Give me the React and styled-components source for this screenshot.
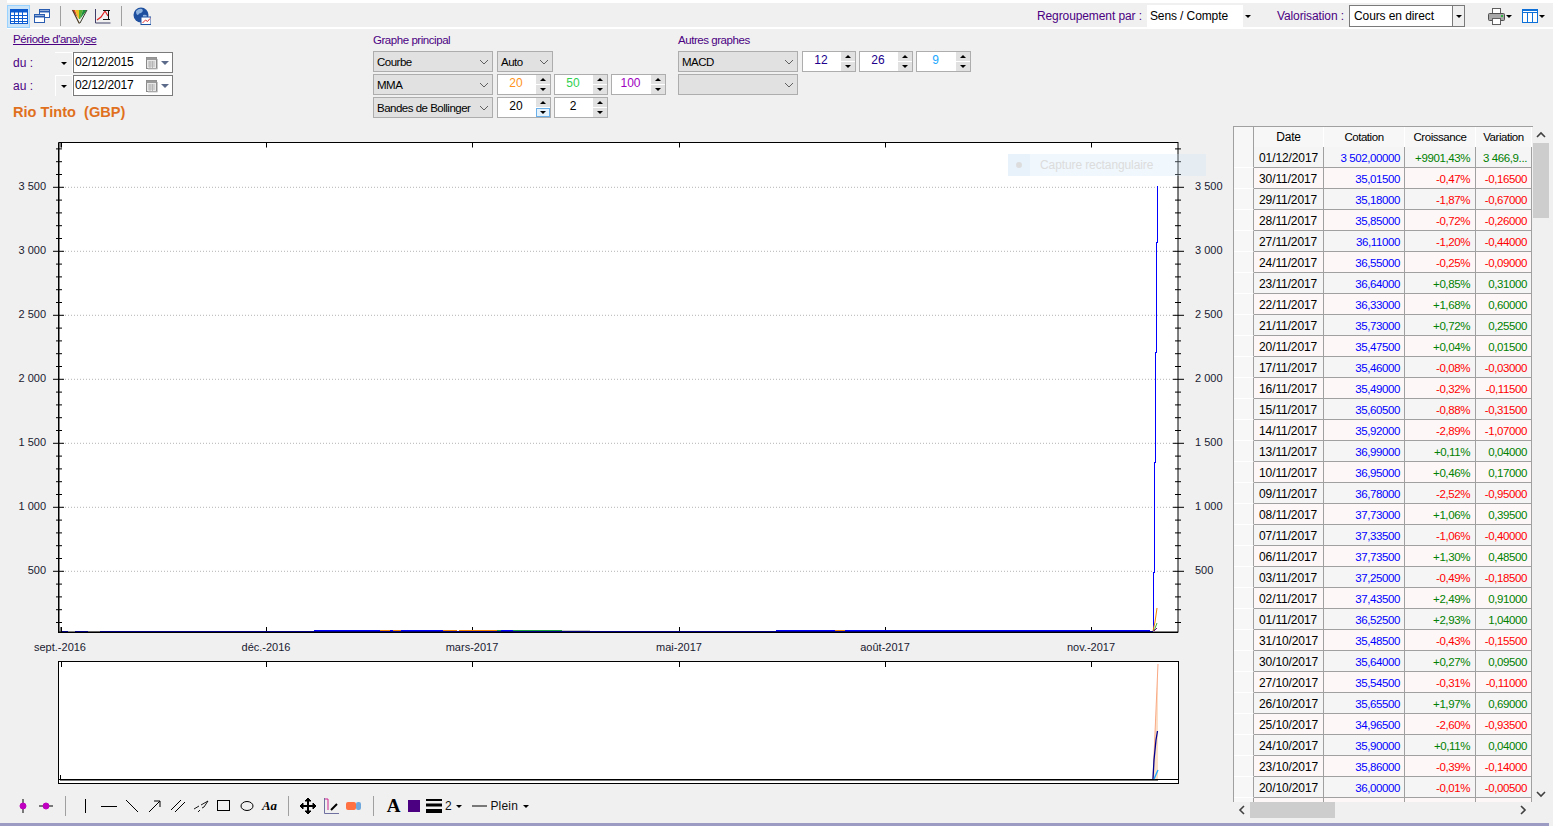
import React from 'react'
import styled, { createGlobalStyle } from 'styled-components'

const GlobalStyle = createGlobalStyle`
  html, body { margin: 0; padding: 0; background: #f0f0f0; }
  body { font-family: "Liberation Sans", Arial, sans-serif; font-size: 12px; color: #000; overflow: hidden; }
`

const INDIGO = '#4b0082'

const Page = styled.div`
  width: 1553px;
  height: 826px;
  display: flex;
  flex-direction: column;
  overflow: hidden;
`

const TopBar = styled.div`
  height: 22px;
  padding-top: 2px;
  margin-left: 7px;
  border-top: 3px solid #fff;
  border-bottom: 2px solid #fff;
  display: flex;
  align-items: center;
`

const IconButton = styled.div`
  width: ${p => p.$w || 23}px;
  height: 23px;
  flex: none;
  display: flex;
  align-items: center;
  justify-content: center;
  box-sizing: border-box;
  margin-left: ${p => p.$ml || 0}px;
  background: ${p => (p.$active ? '#cce4f7' : 'transparent')};
  border: ${p => (p.$active ? '1px solid #99d1ff' : '0')};
`

const Sep = styled.div`
  width: 1px;
  height: 20px;
  flex: none;
  background: #a0a0a0;
  margin-left: ${p => p.$ml || p.$m || 9}px;
  margin-right: ${p => p.$mr || p.$m || 9}px;
`

const Spacer = styled.div`
  flex: 1;
`

const BarLabel = styled.span`
  color: ${INDIGO};
  letter-spacing: -0.1px;
  margin-left: ${p => p.$ml || 0}px;
  white-space: nowrap;
`

const PlainPick = styled.div`
  width: 107px;
  height: 22px;
  margin-left: 5px;
  background: #fff;
  display: flex;
  align-items: center;
  justify-content: space-between;
  padding-left: 3px;
  box-sizing: border-box;
  letter-spacing: -0.1px;
`

const PickArrow = styled.div`
  width: 11px;
  height: 22px;
  background: #f0f0f0;
  display: flex;
  align-items: center;
  justify-content: center;
`

const BoxPick = styled.div`
  width: 116px;
  height: 22px;
  margin-left: 5px;
  background: #fff;
  border: 1px solid #7a7a7a;
  box-sizing: border-box;
  display: flex;
  align-items: center;
  justify-content: space-between;
  padding-left: 4px;
  letter-spacing: -0.1px;
`

const BoxArrow = styled.div`
  width: 11px;
  height: 20px;
  background: #f0f0f0;
  border-left: 1px solid #7a7a7a;
  display: flex;
  align-items: center;
  justify-content: center;
`

const Caret = styled.span`
  width: 0;
  height: 0;
  flex: none;
  border-left: 3px solid transparent;
  border-right: 3px solid transparent;
  ${p => (p.$up ? 'border-bottom' : 'border-top')}: 3px solid ${p => p.$color || '#000'};
  margin-left: ${p => p.$ml || 0}px;
  margin-right: ${p => p.$mr || 0}px;
  display: inline-block;
`

const Filters = styled.div`
  height: 97px;
  display: flex;
  flex: none;
  padding-left: 13px;
`

const Group = styled.div`
  width: ${p => p.$w}px;
  flex: none;
  display: flex;
  flex-direction: column;
`

const GroupTitle = styled.div`
  height: 22px;
  padding-top: ${p => (p.$link ? 3 : 4)}px;
  line-height: 15px;
  box-sizing: border-box;
  color: ${INDIGO};
  font-size: 11.5px;
  letter-spacing: -0.45px;
  text-decoration: ${p => (p.$link ? 'underline' : 'none')};
`

const Rows = styled.div`
  display: flex;
  flex-direction: column;
  gap: 2px;
`

const Row = styled.div`
  display: flex;
  height: 21px;
  gap: ${p => p.$gap ?? 3}px;
`

const Combo = styled.div`
  width: ${p => p.$w || 120}px;
  height: 21px;
  margin-right: ${p => p.$mr || 1}px;
  box-sizing: border-box;
  background: #e1e1e1;
  border: 1px solid #adadad;
  display: flex;
  align-items: center;
  justify-content: space-between;
  padding: 0 3px 0 3px;
  font-size: 11.5px;
  letter-spacing: -0.5px;
  white-space: nowrap;
`

const Spin = styled.div`
  width: ${p => p.$w || 54}px;
  height: 21px;
  box-sizing: border-box;
  background: #fff;
  border: 1px solid #adadad;
  display: flex;
`

const SpinValue = styled.div`
  flex: 1;
  text-align: center;
  line-height: 17px;
  color: ${p => p.$color || '#000'};
  padding-right: 2px;
`

const SpinButtons = styled.div`
  width: 14px;
  flex: none;
  display: flex;
  flex-direction: column;
  gap: 1px;
`

const SpinButton = styled.div`
  flex: 1;
  box-sizing: border-box;
  background: ${p => (p.$hot ? '#e5f1fb' : '#e1e1e1')};
  border: 1px solid ${p => (p.$hot ? '#69b0ea' : '#e1e1e1')};
  display: flex;
  align-items: center;
  justify-content: center;
`

const DateRow = styled.div`
  display: flex;
  align-items: center;
  height: 21px;
  margin-top: ${p => p.$mt || 0}px;
`

const DateLabel = styled.div`
  width: 42px;
  color: ${INDIGO};
`

const DateArrow = styled.div`
  width: 18px;
  height: 21px;
  background: #f0f0f0;
  border-top: 1px solid #fff;
  border-right: 1px solid #fff;
  border-left: ${p => (p.$edge ? '1px solid #fff' : '0')};
  box-sizing: border-box;
  display: flex;
  align-items: center;
  justify-content: center;
`

const DateBox = styled.div`
  width: 100px;
  height: 21px;
  box-sizing: border-box;
  background: #fff;
  border: 1px solid #7a7a7a;
  display: flex;
  align-items: center;
  padding-left: 1px;
  letter-spacing: -0.15px;
`

const DateText = styled.span`
  width: 70px;
  line-height: 17px;
  margin-bottom: 1px;
`

const Title = styled.div`
  margin-top: 7px;
  font-weight: bold;
  font-size: 14.6px;
  line-height: 18px;
  color: #e0701e;
`

const Main = styled.div`
  flex: 1;
  display: flex;
  min-height: 0;
`

const ChartColumn = styled.div`
  width: 1233px;
  flex: none;
  position: relative;
  display: flex;
  flex-direction: column;
`

const ChartSvg = styled.svg`
  display: block;
  flex: none;
`

const CaptureHint = styled.div`
  position: absolute;
  left: 1008px;
  top: 28px;
  width: 198px;
  height: 22px;
  display: flex;
  align-items: center;
  background: rgba(204, 228, 247, 0.3);
  color: #dcdcdc;
  letter-spacing: -0.1px;
`

const CaptureIcon = styled.div`
  width: 22px;
  height: 22px;
  margin-right: 10px;
  display: flex;
  align-items: center;
  justify-content: center;
  background: rgba(204, 228, 247, 0.25);

  &::before {
    content: '';
    width: 6px;
    height: 6px;
    border-radius: 50%;
    background: #dcdcdc;
  }
`

const DrawBar = styled.div`
  height: 30px;
  flex: none;
  display: flex;
  align-items: center;
  padding-left: 11px;
  margin-top: 2px;
`

const DrawText = styled.span`
  margin-left: ${p => p.$ml || 0}px;
  margin-right: ${p => p.$mr || 0}px;
  color: #111;
  letter-spacing: 0.2px;
  display: inline-flex;
  align-items: center;
`

const GlyphA = styled.span`
  font-family: "Liberation Serif", serif;
  font-weight: bold;
  font-size: 19px;
`

const GlyphAa = styled.span`
  font-family: "Liberation Serif", serif;
  font-style: italic;
  font-weight: bold;
  font-size: 13px;
`

const GridColumn = styled.div`
  flex: 1;
  height: 692px;
  display: grid;
  grid-template-columns: 300px 16px;
  grid-template-rows: 676px 16px;
`

const GridClip = styled.div`
  overflow: hidden;
  border-top: 1px solid #a0a0a0;
  border-left: 1px solid #a0a0a0;
  box-sizing: border-box;
  background: #f0f0f0;
`

const GridRow = styled.div`
  display: grid;
  grid-template-columns: 20px 70px 81px 71px 56px;
  height: ${p => p.$h || 21}px;
`

const HeadCell = styled.div`
  background: #f7f7f7;
  border-right: 1px solid ${p => (p.$corner ? '#a0a0a0' : '#fff')};
  border-bottom: 1px solid #a0a0a0;
  text-align: center;
  line-height: 21px;
  font-size: ${p => (p.$wide ? 12 : 11.5)}px;
  letter-spacing: ${p => (p.$wide ? -0.2 : -0.45)}px;
  white-space: nowrap;
`

const StubCell = styled.div`
  background: #f7f7f7;
  border-right: 1px solid #a0a0a0;
  border-bottom: 1px solid #fff;
`

const Cell = styled.div`
  box-sizing: border-box;
  background: ${p => (p.$odd ? '#fdf8f7' : '#f5f5f5')};
  border-right: 1px solid #a0a0a0;
  border-bottom: 1px solid #a0a0a0;
  color: ${p => p.$color || '#000'};
  text-align: right;
  padding-right: ${p => p.$pr || 3}px;
  font-size: 11.5px;
  line-height: 22px;
  letter-spacing: -0.4px;
  white-space: nowrap;
  overflow: hidden;
`

const DateCell = styled(Cell)`
  text-align: left;
  padding: 0 0 0 5px;
  font-size: 12px;
  letter-spacing: -0.1px;
`

const ScrollV = styled.div`
  width: 16px;
  padding-top: 1px;
  box-sizing: border-box;
  display: flex;
  flex-direction: column;
  align-items: stretch;
`

const ScrollArrow = styled.div`
  height: 16px;
  width: ${p => p.$w || 'auto'};
  flex: none;
  display: flex;
  align-items: center;
  justify-content: center;
`

const ScrollThumbV = styled.div`
  height: 75px;
  background: #cdcdcd;
  flex: none;
`

const ScrollH = styled.div`
  height: 16px;
  display: flex;
  align-items: center;
  background: #f0f0f0;
  padding-right: 2px;
`

const ScrollThumbH = styled.div`
  width: 85px;
  height: 16px;
  background: #cdcdcd;
  flex: none;
`

const BottomEdge = styled.div`
  height: 3px;
  width: 1549px;
  flex: none;
  background: #9b9bc3;
`

const Chevron = ({ dir = 'down', size = 10, color = '#606060', sw = 1 }) => {
  const pts = {
    down: '1,3 5,7 9,3',
    up: '1,7 5,3 9,7',
    left: '7,1 3,5 7,9',
    right: '3,1 7,5 3,9',
  }
  return (
    <svg width={size} height={size} viewBox="0 0 10 10">
      <polyline points={pts[dir]} fill="none" stroke={color} strokeWidth={sw} />
    </svg>
  )
}

const ComboBox = ({ w, mr, children }) => (
  <Combo $w={w} $mr={mr}>
    <span>{children}</span>
    <Chevron />
  </Combo>
)

const Spinner = ({ value, color, w, hot }) => (
  <Spin $w={w}>
    <SpinValue $color={color}>{value}</SpinValue>
    <SpinButtons>
      <SpinButton><Caret $up /></SpinButton>
      <SpinButton $hot={hot}><Caret /></SpinButton>
    </SpinButtons>
  </Spin>
)

const CalendarIcon = () => (
  <svg width="14" height="14" viewBox="0 0 14 14">
    <rect x="1.5" y="1.5" width="10" height="11" fill="#e8e8e8" stroke="#8a8a8a" />
    <rect x="1.5" y="1.5" width="10" height="2.5" fill="#9a9a9a" />
    <path d="M3 6h7M3 8h7M3 10h7M5 5v7M7.5 5v7" stroke="#b5b5b5" />
    <path d="M12.5 3v10H3" stroke="#c8c8c8" fill="none" />
  </svg>
)

const DatePicker = ({ value }) => (
  <DateBox>
    <DateText>{value}</DateText>
    <CalendarIcon />
    <svg width="10" height="6" viewBox="0 0 10 6" style={{ marginLeft: 1 }}>
      <polygon points="1,1 9,1 5,5" fill="#5c6b8a" />
    </svg>
  </DateBox>
)

const GridIcon = () => (
  <svg width="18" height="16" viewBox="0 0 18 16">
    <rect x="0.5" y="1.5" width="17" height="14" fill="#fff" stroke="#0d5bd0" />
    <rect x="0.5" y="1.5" width="17" height="3" fill="#0d5bd0" />
    <path d="M0 7.5h18M0 10.5h18M0 13.5h18M4.5 4v12M8.5 4v12M12.5 4v12" stroke="#0d5bd0" />
  </svg>
)

const WindowsIcon = () => (
  <svg width="16" height="16" viewBox="0 0 16 16">
    <rect x="5.5" y="1.5" width="10" height="8" fill="#fff" stroke="#2a5db0" />
    <path d="M5.5 3.5h10" stroke="#2a5db0" strokeWidth="2" />
    <rect x="0.5" y="6.5" width="10" height="8" fill="#fff" stroke="#2a5db0" />
    <path d="M0.5 8.5h10" stroke="#2a5db0" strokeWidth="2" />
  </svg>
)

const FunnelIcon = () => (
  <svg width="16" height="15" viewBox="0 0 16 15">
    <polygon points="0,1 3,1 6,9" fill="#d9482b" />
    <polygon points="3,1 7,1 7,10 6,9" fill="#f0c020" />
    <polygon points="7,1 11,1 8,10 7,10" fill="#58b030" />
    <polygon points="11,1 15,1 8,10" fill="#1f8f3a" />
    <path d="M0.5 1L7 14L8 14" fill="none" stroke="#4a3a20" strokeWidth="1.2" />
    <path d="M15 1L8 14" stroke="#3a3a2a" strokeWidth="1" />
  </svg>
)

const CrossChartIcon = () => (
  <svg width="16" height="16" viewBox="0 0 16 16">
    <path d="M0.5 1v14h15" fill="none" stroke="#40406a" />
    <path d="M2 12L6 9L10 3L13 8" fill="none" stroke="#e02020" strokeWidth="1.2" />
    <path d="M8 2.5h7M8 11.5h7M13.5 2v10" fill="none" stroke="#111" />
  </svg>
)

const GlobeIcon = () => (
  <svg width="18" height="18" viewBox="0 0 18 18">
    <circle cx="8" cy="8" r="7.5" fill="#1f4f9f" />
    <path d="M3 4q3-3 6-2q2 2-1 4q-2 0-3 2q-2 0-2-4zM10 8q3-1 4 1q-1 3-3 4q-2-2-1-5z" fill="#8fb4e0" />
    <rect x="8" y="10" width="10" height="7.5" fill="#fff" stroke="#2050a0" />
    <path d="M9.5 16l3-3l2 1.5l2.5-3" fill="none" stroke="#e03030" />
  </svg>
)

const PrinterIcon = () => (
  <svg width="17" height="17" viewBox="0 0 17 17">
    <rect x="4.5" y="0.5" width="8" height="5" fill="#fff" stroke="#606060" />
    <rect x="0.5" y="5.5" width="16" height="7" rx="1" fill="#a8a8a8" stroke="#505050" />
    <rect x="4.5" y="10.5" width="8" height="6" fill="#fff" stroke="#606060" />
    <rect x="13" y="7" width="2" height="2" fill="#30b040" />
  </svg>
)

const TableIcon = () => (
  <svg width="16" height="14" viewBox="0 0 16 14">
    <rect x="0.5" y="0.5" width="15" height="13" fill="#fff" stroke="#0d6fd8" />
    <path d="M0 3.5h16M5.5 3v11M10.5 3v11" stroke="#0d6fd8" />
    <path d="M0 1.5h16" stroke="#0d6fd8" />
  </svg>
)

const Tool = ({ children, w }) => <IconButton $w={w}>{children}</IconButton>

const Draw = ({ children, w = 16, h = 16 }) => (
  <svg width={w} height={h} viewBox={`0 0 ${w} ${h}`} fill="none" stroke="#000">{children}</svg>
)

const CHART_Y = 126
const X_TICKS = [61, 266, 472, 679, 885, 1091]
const X_LABELS = ['sept.-2016', 'déc.-2016', 'mars-2017', 'mai-2017', 'août-2017', 'nov.-2017']
const Y_LABELS = ['3 500', '3 000', '2 500', '2 000', '1 500', '1 000', '500']
const yOf = v => 635.3 - v * 0.128 - CHART_Y
const LEFT = 59
const RIGHT = 1178

const flatSegments = [
  [62, 68, '#0000ff', 0], [75, 88, '#0000ff', 0], [88, 100, '#c8c8c8', 0], [100, 1153, '#0000ff', 0],
  [314, 380, '#0000ff', -1], [380, 390, '#f08000', -1], [390, 393, '#0000ff', -1], [393, 401, '#f08000', -1],
  [401, 443, '#0000ff', -1], [443, 457, '#f08000', -1], [459, 497, '#f08000', -1], [497, 501, '#18a040', -1],
  [501, 513, '#0000ff', -1], [513, 562, '#18a040', -1], [562, 590, '#c8c8c8', -1],
  [776, 835, '#0000ff', -1], [835, 845, '#f08000', -1], [845, 1150, '#0000ff', -1],
]

const MainChart = () => {
  const minors = []
  for (let v = 100; v <= 3800; v += 100) if (v % 500) minors.push(v)
  const top = 142 - CHART_Y + 0.5
  const bottom = 632 - CHART_Y
  return (
    <ChartSvg width="1233" height="529" fontFamily='"Liberation Sans", Arial, sans-serif' fontSize="11">
      <rect x={LEFT} y={top} width={RIGHT - LEFT} height={bottom - top} fill="#fff" />
      {Y_LABELS.map((label, i) => {
        const y = yOf(3500 - i * 500)
        return (
          <g key={label}>
            <line x1={LEFT} x2={RIGHT} y1={y} y2={y} stroke="#b4b4b4" strokeDasharray="1 2" />
            <line x1={53} x2={64} y1={y} y2={y} stroke="#000" />
            <line x1={1173} x2={1184} y1={y} y2={y} stroke="#000" />
            <text x={46} y={y + 2.7} textAnchor="end" fill="#1a1a30">{label}</text>
            <text x={1195} y={y + 2.7} fill="#1a1a30">{label}</text>
          </g>
        )
      })}
      {minors.map(v => (
        <g key={v} stroke="#000">
          <line x1={56} x2={62} y1={yOf(v)} y2={yOf(v)} />
          <line x1={1175} x2={1181} y1={yOf(v)} y2={yOf(v)} />
        </g>
      ))}
      {X_TICKS.map((x, i) => (
        <g key={x}>
          <line x1={x + 0.5} x2={x + 0.5} y1={top} y2={top + 5} stroke="#000" />
          <line x1={x + 0.5} x2={x + 0.5} y1={bottom - 5} y2={bottom} stroke="#000" />
          <text x={x - (i === 0 ? 1 : 0)} y={525} textAnchor="middle" fill="#1a1a30">{X_LABELS[i]}</text>
        </g>
      ))}
      {flatSegments.map(([a, b, c, dy], i) => (
        <line key={i} x1={a} x2={b} y1={bottom - 0.5 + dy} y2={bottom - 0.5 + dy} stroke={c} strokeWidth="1" shapeRendering="crispEdges" />
      ))}
      <polyline points={`1153,${bottom - 1} 1153,${bottom - 60} 1154,${bottom - 60} 1154,${bottom - 170} 1155,${bottom - 170} 1155,${bottom - 280} 1156,${bottom - 280} 1156,${bottom - 390} 1157,${bottom - 390} 1157,${yOf(3500) - 1}`} fill="none" stroke="#0000ff" strokeWidth="1" shapeRendering="crispEdges" />
      <polyline points={`1153,${bottom - 1} 1155,${bottom - 10} 1157,${bottom - 24}`} fill="none" stroke="#f08000" />
      <polyline points={`1154,${bottom - 1} 1157,${bottom - 9}`} fill="none" stroke="#40b040" />
      <polyline points={`1154,${bottom - 1} 1157,${bottom - 4}`} fill="none" stroke="#800080" />
      <rect x={LEFT} y={top} width={RIGHT - LEFT} height={bottom - top} fill="none" stroke="#000" />
      <line x1={LEFT - 0.5} x2={LEFT - 0.5} y1={top} y2={bottom + 1} stroke="#000" />
      <line x1={LEFT} x2={RIGHT} y1={bottom + 0.5} y2={bottom + 0.5} stroke="#000" />
      <path d={`M${LEFT + 2} ${top}v5M${LEFT + 2} ${bottom - 5}v5`} stroke="#000" />
    </ChartSvg>
  )
}

const MiniChart = () => (
  <ChartSvg width="1233" height="134">
    <rect x="58.5" y="6.5" width="1120" height="122" fill="#fff" stroke="#000" />
    <line x1="59" x2="1178" y1="124.5" y2="124.5" stroke="#000" />
    <line x1="60" x2="1158" y1="125.5" y2="125.5" stroke="#777" />
    {X_TICKS.map(x => <line key={x} x1={x + 0.5} x2={x + 0.5} y1="7" y2="12" stroke="#000" />)}
    <line x1="60.5" x2="60.5" y1="120" y2="124" stroke="#000" />
    <polygon points="1153,124 1158,9 1158,124" fill="#fde0c8" />
    <line x1="1153" y1="124" x2="1158" y2="9" stroke="#f9a884" />
    <polyline points="1153,124 1154,105 1155,95 1156,85 1157.5,76" fill="none" stroke="#000090" strokeWidth="1.3" />
    <line x1="1154" y1="124" x2="1158" y2="115" stroke="#18a8ff" strokeWidth="1.3" />
  </ChartSvg>
)

const ROWS = [
  ['01/12/2017', '3 502,00000', '+9901,43%', '3 466,9...'],
  ['30/11/2017', '35,01500', '-0,47%', '-0,16500'],
  ['29/11/2017', '35,18000', '-1,87%', '-0,67000'],
  ['28/11/2017', '35,85000', '-0,72%', '-0,26000'],
  ['27/11/2017', '36,11000', '-1,20%', '-0,44000'],
  ['24/11/2017', '36,55000', '-0,25%', '-0,09000'],
  ['23/11/2017', '36,64000', '+0,85%', '0,31000'],
  ['22/11/2017', '36,33000', '+1,68%', '0,60000'],
  ['21/11/2017', '35,73000', '+0,72%', '0,25500'],
  ['20/11/2017', '35,47500', '+0,04%', '0,01500'],
  ['17/11/2017', '35,46000', '-0,08%', '-0,03000'],
  ['16/11/2017', '35,49000', '-0,32%', '-0,11500'],
  ['15/11/2017', '35,60500', '-0,88%', '-0,31500'],
  ['14/11/2017', '35,92000', '-2,89%', '-1,07000'],
  ['13/11/2017', '36,99000', '+0,11%', '0,04000'],
  ['10/11/2017', '36,95000', '+0,46%', '0,17000'],
  ['09/11/2017', '36,78000', '-2,52%', '-0,95000'],
  ['08/11/2017', '37,73000', '+1,06%', '0,39500'],
  ['07/11/2017', '37,33500', '-1,06%', '-0,40000'],
  ['06/11/2017', '37,73500', '+1,30%', '0,48500'],
  ['03/11/2017', '37,25000', '-0,49%', '-0,18500'],
  ['02/11/2017', '37,43500', '+2,49%', '0,91000'],
  ['01/11/2017', '36,52500', '+2,93%', '1,04000'],
  ['31/10/2017', '35,48500', '-0,43%', '-0,15500'],
  ['30/10/2017', '35,64000', '+0,27%', '0,09500'],
  ['27/10/2017', '35,54500', '-0,31%', '-0,11000'],
  ['26/10/2017', '35,65500', '+1,97%', '0,69000'],
  ['25/10/2017', '34,96500', '-2,60%', '-0,93500'],
  ['24/10/2017', '35,90000', '+0,11%', '0,04000'],
  ['23/10/2017', '35,86000', '-0,39%', '-0,14000'],
  ['20/10/2017', '36,00000', '-0,01%', '-0,00500'],
  ['', '', '', ''],
]

const tone = s => (s === '' ? '#000' : s.startsWith('-') ? '#ff0000' : '#008000')

const DataGrid = () => (
  <GridClip>
    <GridRow $h={20}>
      <HeadCell $corner />
      <HeadCell $wide>Date</HeadCell>
      <HeadCell>Cotation</HeadCell>
      <HeadCell>Croissance</HeadCell>
      <HeadCell>Variation</HeadCell>
    </GridRow>
    {ROWS.map((r, i) => (
      <GridRow key={i}>
        <StubCell />
        <DateCell $odd={i % 2 === 1}>{r[0]}</DateCell>
        <Cell $odd={i % 2 === 1} $color="#0000ff" $pr={4}>{r[1]}</Cell>
        <Cell $odd={i % 2 === 1} $color={tone(r[2])} $pr={5}>{r[2]}</Cell>
        <Cell $odd={i % 2 === 1} $color={tone(r[3])} $pr={4}>{r[3]}</Cell>
      </GridRow>
    ))}
  </GridClip>
)

export default function App() {
  return (
    <Page>
      <GlobalStyle />
      <TopBar>
        <IconButton $active><GridIcon /></IconButton>
        <IconButton><WindowsIcon /></IconButton>
        <Sep $m={7} />
        <IconButton><FunnelIcon /></IconButton>
        <IconButton><CrossChartIcon /></IconButton>
        <Sep $m={7} />
        <IconButton $ml={1}><GlobeIcon /></IconButton>
        <Spacer />
        <BarLabel>Regroupement par :</BarLabel>
        <PlainPick>Sens / Compte<PickArrow><Caret /></PickArrow></PlainPick>
        <BarLabel $ml={23}>Valorisation :</BarLabel>
        <BoxPick>Cours en direct<BoxArrow><Caret /></BoxArrow></BoxPick>
        <IconButton $w={17} $ml={23}><PrinterIcon /></IconButton>
        <Caret $ml={1} />
        <IconButton $w={16} $ml={10}><TableIcon /></IconButton>
        <Caret $ml={1} $mr={8} />
      </TopBar>

      <Filters>
        <Group $w={360}>
          <GroupTitle $link>Période d'analyse</GroupTitle>
          <DateRow $mt={1}>
            <DateLabel>du :</DateLabel>
            <DateArrow><Caret /></DateArrow>
            <DatePicker value="02/12/2015" />
          </DateRow>
          <DateRow $mt={2}>
            <DateLabel>au :</DateLabel>
            <DateArrow $edge><Caret /></DateArrow>
            <DatePicker value="02/12/2017" />
          </DateRow>
          <Title>Rio Tinto&nbsp; (GBP)</Title>
        </Group>
        <Group $w={305}>
          <GroupTitle>Graphe principal</GroupTitle>
          <Rows>
            <Row>
              <ComboBox>Courbe</ComboBox>
              <ComboBox w={56}>Auto</ComboBox>
            </Row>
            <Row>
              <ComboBox>MMA</ComboBox>
              <Spinner value="20" color="#ff9320" />
              <Spinner value="50" color="#30d050" />
              <Spinner value="100" color="#a000c0" w={55} />
            </Row>
            <Row>
              <ComboBox>Bandes de Bollinger</ComboBox>
              <Spinner value="20" hot />
              <Spinner value="2" />
            </Row>
          </Rows>
        </Group>
        <Group $w={300}>
          <GroupTitle>Autres graphes</GroupTitle>
          <Rows>
            <Row>
              <ComboBox mr={1}>MACD</ComboBox>
              <Spinner value="12" color="#20008c" />
              <Spinner value="26" color="#20008c" />
              <Spinner value="9" color="#20a8ff" w={55} />
            </Row>
            <Row>
              <ComboBox />
            </Row>
          </Rows>
        </Group>
      </Filters>

      <Main>
        <ChartColumn>
          <MainChart />
          <MiniChart />
          <CaptureHint>
            <CaptureIcon />
            Capture rectangulaire
          </CaptureHint>
          <DrawBar>
            <Tool>
              <Draw><path d="M8 1v14" /><circle cx="8" cy="8" r="3" fill="#c000c0" stroke="#c000c0" /></Draw>
            </Tool>
            <Tool>
              <Draw><path d="M1 8h14" /><circle cx="8" cy="8" r="3" fill="#c000c0" stroke="#c000c0" /></Draw>
            </Tool>
            <Sep $ml={8} $mr={7} />
            <Tool w={24}><Draw><path d="M8.5 1v14" /></Draw></Tool>
            <Tool><Draw><path d="M0 8.5h16" /></Draw></Tool>
            <Tool><Draw><path d="M2 2l12 12" /></Draw></Tool>
            <Tool><Draw><path d="M2 14L13 3M7 3h6v6" /></Draw></Tool>
            <Tool><Draw><path d="M1 12L11 2M5 14L15 4" /></Draw></Tool>
            <Tool>
              <Draw><path d="M1 11l5-3M8 7l7-4L11 9L9 10M5 14l2-2" strokeWidth="0.9" /></Draw>
            </Tool>
            <Tool><Draw w={14} h={12}><rect x="0.5" y="0.5" width="12" height="10" /></Draw></Tool>
            <Tool><Draw w={14} h={12}><ellipse cx="7" cy="6" rx="6" ry="4.5" /></Draw></Tool>
            <Tool><GlyphAa>Aa</GlyphAa></Tool>
            <Sep $m={7} />
            <Tool>
              <Draw><path d="M8 0v16M0 8h16" strokeWidth="2" /><path d="M8 0l-3 3h6zM8 16l-3-3h6zM0 8l3-3v6zM16 8l-3-3v6z" fill="#000" /></Draw>
            </Tool>
            <Tool>
              <Draw><path d="M1.5 0v15.5H16" stroke="#7070a0" /><path d="M2 1h3v11" stroke="#d02090" /><path d="M8 12l6-6" strokeWidth="2" /></Draw>
            </Tool>
            <Tool>
              <Draw h={8}><rect x="0" y="0" width="10" height="8" rx="2" fill="#ff7043" stroke="none" /><rect x="10" y="0" width="5" height="8" rx="2" fill="#6fa8dc" stroke="none" /></Draw>
            </Tool>
            <Sep $m={8} />
            <Tool><GlyphA>A</GlyphA></Tool>
            <Tool w={17}><Draw w={12} h={12}><rect width="12" height="12" fill="#4b0082" stroke="none" /></Draw></Tool>
            <Tool w={24}>
              <Draw h={14}><path d="M0 1h16" strokeWidth="2" /><path d="M0 6h16" strokeWidth="3" /><path d="M0 12h16" strokeWidth="4" /></Draw>
            </Tool>
            <DrawText $ml={-1} $mr={4}>2</DrawText>
            <Caret />
            <DrawText $ml={10}>
              <Draw w={15} h={2}><path d="M0 1h15" /></Draw>&nbsp;Plein
            </DrawText>
            <Caret $ml={5} />
          </DrawBar>
        </ChartColumn>
        <GridColumn>
          <DataGrid />
          <ScrollV>
            <ScrollArrow><Chevron dir="up" color="#404040" sw={1.6} /></ScrollArrow>
            <ScrollThumbV />
            <Spacer />
            <ScrollArrow><Chevron dir="down" color="#404040" sw={1.6} /></ScrollArrow>
          </ScrollV>
          <ScrollH>
            <ScrollArrow $w="17px"><Chevron dir="left" color="#404040" sw={1.6} /></ScrollArrow>
            <ScrollThumbH />
            <Spacer />
            <ScrollArrow $w="16px"><Chevron dir="right" color="#404040" sw={1.6} /></ScrollArrow>
          </ScrollH>
        </GridColumn>
      </Main>
      <BottomEdge />
    </Page>
  )
}
